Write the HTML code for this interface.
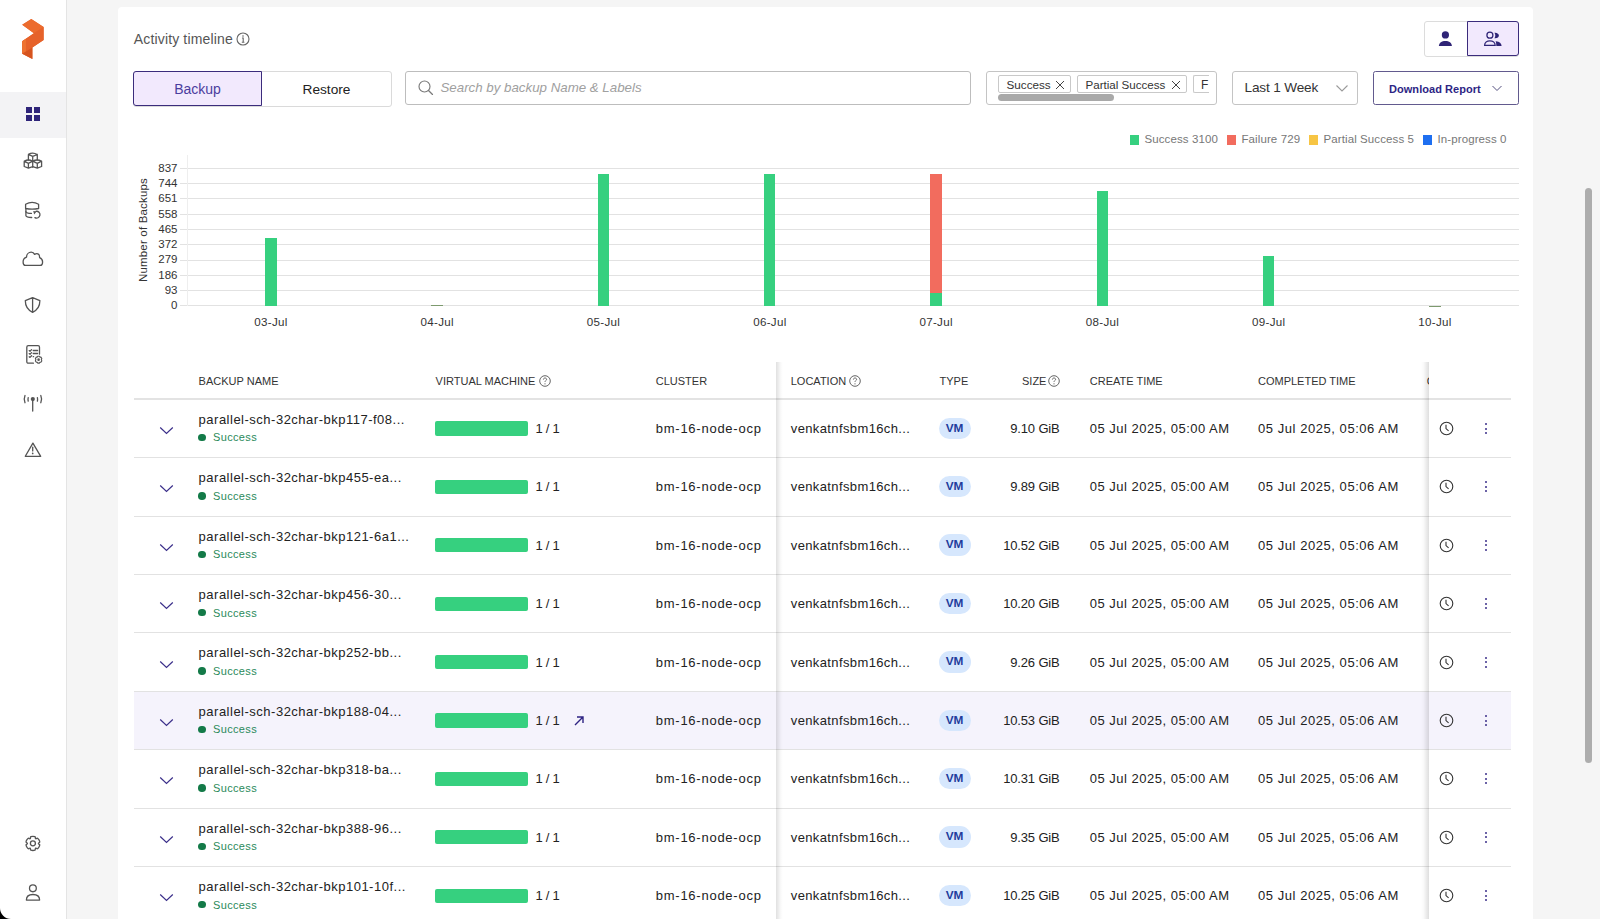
<!DOCTYPE html>
<html><head><meta charset="utf-8"><style>
html,body{margin:0;padding:0;width:1600px;height:919px;overflow:hidden;background:#f5f5f5;font-family:"Liberation Sans", sans-serif;}
.t{position:absolute;line-height:1;white-space:nowrap;}
</style></head><body>
<div style="position:absolute;left:0;top:0;width:66px;height:919px;background:#fff;border-right:1px solid #e4e4e4"></div>
<div style="position:absolute;left:0;top:92px;width:66px;height:46px;background:#f3f3f5"></div>
<svg style="position:absolute;left:0;top:0" width="66" height="80" viewBox="0 0 66 80">
<polygon points="31.3,19 43.6,27.1 43.6,40.1 32.4,47.5 32.4,59 22.2,53.7 22.2,41.2 33.9,33.3 22.2,24.7" fill="#e9672c"/>
<polygon points="31.3,19 43.6,27.1 33.9,33.3 22.2,24.7" fill="#ec6c2e"/>
<polygon points="22.2,41.2 33.9,33.3 43.6,27.1 43.6,40.1 32.4,47.5 22.2,53.7" fill="#e6622a"/>
<polygon points="22.2,41.2 26,38.7 26,51.4 22.2,53.7" fill="#ee7230"/>
<polygon points="22.2,53.7 32.4,47.5 32.4,59" fill="#d6541f"/>
</svg>
<svg style="position:absolute;left:26px;top:107px" width="15" height="15" viewBox="0 0 15 15">
<rect x="0" y="0" width="6" height="6" fill="#2e2479"/><rect x="8" y="0" width="6" height="6" fill="#2e2479"/>
<rect x="0" y="8" width="6" height="6" fill="#2e2479"/><rect x="8" y="8" width="6" height="6" fill="#2e2479"/></svg>
<svg style="position:absolute;left:21px;top:149px" width="24" height="22" viewBox="0 0 24 22"><g fill="none" stroke="#545454" stroke-width="1.3" stroke-linejoin="round" stroke-linecap="round" stroke-width="1.2">
<path d="M7.4 5.4 Q11.72 2.7 16.3 5.5 L11.72 7.4 Z M7.4 5.4 V11 M16.3 5.5 V11 M11.72 7.4 V18.2"/>
<path d="M3.2 12.2 Q7.4 9.8 11.72 12.2 L7.4 14.35 Z M3.2 12.2 V17.5 L7.4 19.1 L11.72 17.7 M7.4 14.35 V19.1"/>
<path d="M11.72 12.2 Q16.3 9.8 20.6 12.2 L16.3 14.35 Z M20.6 12.2 V17.5 L16.3 19.1 L11.72 17.7 M16.3 14.35 V19.1"/>
</g></svg>
<svg style="position:absolute;left:22px;top:198px" width="22" height="24" viewBox="0 0 22 24"><g fill="none" stroke="#545454" stroke-width="1.3" stroke-linejoin="round" stroke-linecap="round" stroke-width="1.35">
<path d="M3.6 6.2 Q10.1 2.4 16.6 6.2 V10.5 Q10.1 11.9 3.6 10.5 Z"/>
<path d="M3.9 10.5 V17.6 Q4.3 19.4 9.7 19.5"/>
<path d="M3.9 13.6 Q4.4 15.4 9.4 15.4"/>
<path d="M14 13.3 A3.4 3.4 0 1 1 12.9 19.6"/>
</g><polygon points="11.2,13.1 14.6,13.4 12.2,16.4" fill="#545454"/></svg>
<svg style="position:absolute;left:20px;top:247px" width="26" height="24" viewBox="0 0 26 24"><g fill="none" stroke="#545454" stroke-width="1.3" stroke-linejoin="round" stroke-linecap="round" stroke-width="1.35">
<path d="M5.4 18.4 H20.2 C21.7 18.4 22.6 16.9 22.6 14.9 C22.6 12.9 21.4 11.3 19.6 10.6 C19.6 8.3 18.4 6.7 16.8 6.7 C15.9 6.7 15.2 7 14.6 7.4 C13.9 6 12.6 5.2 11.2 5.2 C8.6 5.2 6.6 7.3 6.5 10.2 C4.5 10.9 3.1 12.6 3.1 14.9 C3.1 16.9 4.1 18.4 5.4 18.4 Z"/>
</g></svg>
<svg style="position:absolute;left:21px;top:293px" width="24" height="24" viewBox="0 0 24 24"><g fill="none" stroke="#545454" stroke-width="1.3" stroke-linejoin="round" stroke-linecap="round" stroke-width="1.4">
<path d="M11.6 4.6 L4.3 7.6 C4.3 13 7 17.3 11.6 19.3 C16.2 17.3 18.9 13 18.9 7.6 Z M11.6 4.6 V19.3"/>
</g></svg>
<svg style="position:absolute;left:22px;top:342px" width="24" height="26" viewBox="0 0 24 26"><g fill="none" stroke="#545454" stroke-width="1.3" stroke-linejoin="round" stroke-linecap="round" stroke-width="1.5">
<path d="M11.4 21.2 H6.3 C5.4 21.2 4.8 20.6 4.8 19.7 V5.2 C4.8 4.3 5.4 3.7 6.3 3.7 H16 C16.9 3.7 17.5 4.3 17.5 5.2 V12.2"/>
</g><g fill="none" stroke="#545454" stroke-width="1.3" stroke-linejoin="round" stroke-linecap="round" stroke-width="1.1">
<path d="M7.2 8.6 L8 9.2 L9.6 7.6 M11.2 8.5 H15.6"/>
<path d="M7.2 11.6 L8 12.2 L9.6 10.6 M11.2 11.5 H15.6"/>
<path d="M7.2 14.8 L8 15.4 L9.6 13.8 M11.2 14.7 H11.6"/>
</g><g fill="none" stroke="#545454" stroke-width="1.1" stroke-linejoin="round">
<path d="M15.7 14.2 H17.5 L17.9 15.1 L18.9 15.1 L19.8 16.6 L19.3 17.4 L19.8 18.9 L18.9 20.2 L17.9 20.2 L17.5 21.1 H15.7 L15.3 20.2 L14.3 20.2 L13.4 18.9 L13.9 17.4 L13.4 16.6 L14.3 15.1 L15.3 15.1 Z"/>
</g><circle cx="16.6" cy="17.65" r="1.3" fill="#545454"/></svg>
<svg style="position:absolute;left:20px;top:391px" width="26" height="24" viewBox="0 0 26 24"><g fill="none" stroke="#545454" stroke-width="1.3" stroke-linejoin="round" stroke-linecap="round" stroke-width="1.5">
<path d="M12.7 8.5 V20"/>
<path d="M8.2 6.6 Q7.8 8.35 8.2 10.1 M17.4 6.6 Q17.8 8.35 17.4 10.1"/>
<path d="M5 4.5 Q3.4 8.1 5 11.7 M20.8 4.5 Q22.4 8.1 20.8 11.7"/>
</g><circle cx="12.8" cy="8.1" r="2.1" fill="#545454"/></svg>
<svg style="position:absolute;left:21px;top:438px" width="24" height="24" viewBox="0 0 24 24"><g fill="none" stroke="#545454" stroke-width="1.3" stroke-linejoin="round" stroke-linecap="round" stroke-width="1.4">
<path d="M11.9 5.1 L19.7 18.3 H4.3 Z"/>
<path d="M11.7 9.2 V12.9"/>
</g><circle cx="11.7" cy="15.4" r="0.85" fill="#545454"/></svg>
<svg style="position:absolute;left:21px;top:831px" width="24" height="24" viewBox="0 0 24 24"><g fill="none" stroke="#545454" stroke-width="1.3" stroke-linejoin="round" stroke-linecap="round" stroke-width="1.4">
<path d="M9.50 6.52 C8.61 5.05 15.19 5.05 14.30 6.52 Q14.20 8.47 15.84 7.41 C16.66 5.90 19.96 11.60 18.24 11.56 Q16.50 12.45 18.24 13.34 C19.96 13.30 16.66 19.00 15.84 17.49 Q14.20 16.43 14.30 18.38 C15.19 19.85 8.61 19.85 9.50 18.38 Q9.60 16.43 7.96 17.49 C7.14 19.00 3.84 13.30 5.56 13.34 Q7.30 12.45 5.56 11.56 C3.84 11.60 7.14 5.90 7.96 7.41 Q9.60 8.47 9.50 6.52 Z"/>
<circle cx="11.9" cy="12.3" r="2.5"/>
</g></svg>
<svg style="position:absolute;left:21px;top:880px" width="24" height="24" viewBox="0 0 24 24"><g fill="none" stroke="#545454" stroke-width="1.3" stroke-linejoin="round" stroke-linecap="round" stroke-width="1.4">
<circle cx="11.9" cy="8.35" r="3.4"/>
<path d="M5.4 20.1 C5.4 16.4 8.2 14.5 11.9 14.5 C15.6 14.5 18.6 16.4 18.6 20.1 Z"/>
</g></svg>
<svg style="position:absolute;left:0;top:908px" width="11" height="11" viewBox="0 0 11 11"><path d="M0 0 A11 11 0 0 0 11 11 H0 Z" fill="#000"/></svg>
<div style="position:absolute;left:118px;top:7px;width:1415px;height:920px;background:#fff;border-radius:4px"></div>
<div class="t" style="left:133.8px;top:31.85px;font-size:14px;color:#555;letter-spacing:0.15px">Activity timeline</div>
<svg style="position:absolute;left:236px;top:32px" width="14" height="14" viewBox="0 0 14 14"><g fill="none" stroke="#666" stroke-width="1.1">
<circle cx="7" cy="7" r="6"/><path d="M6 6 H7.2 V10.3 M5.8 10.3 H8.4"/></g><circle cx="7" cy="4" r="0.8" fill="#666"/></svg>
<div style="position:absolute;left:133px;top:70.5px;width:259px;height:36px;border:1px solid #dadada;border-radius:3px;box-sizing:border-box"></div>
<div style="position:absolute;left:133px;top:71px;width:129px;height:35px;border:1.7px solid #3b2c7c;background:#f2e9fd;border-radius:3px 0 0 3px;box-sizing:border-box"></div>
<div class="t" style="left:197.5px;transform:translateX(-50%);top:82.25px;font-size:14px;color:#4b3d9e;">Backup</div>
<div class="t" style="left:326.5px;transform:translateX(-50%);top:82.50px;font-size:13.7px;color:#222;">Restore</div>
<div style="position:absolute;left:405px;top:71px;width:566px;height:34px;border:1px solid #bdbdbd;border-radius:3px;box-sizing:border-box"></div>
<svg style="position:absolute;left:417px;top:79px" width="18" height="18" viewBox="0 0 18 18"><g fill="none" stroke="#7a7a7a" stroke-width="1.15" stroke-linecap="round">
<circle cx="7.5" cy="7.5" r="5.5"/><path d="M11.5 11.5 L15.5 15.5"/></g></svg>
<div class="t" style="left:440.5px;top:81.14px;font-size:13.3px;color:#a0a0a0;font-style:italic;letter-spacing:0.0px">Search by backup Name &amp; Labels</div>
<div style="position:absolute;left:986px;top:71px;width:231px;height:34px;border:1px solid #c4c4c4;border-radius:3px;box-sizing:border-box"></div>
<div style="position:absolute;left:998px;top:75px;width:73px;height:18px;border:1px solid #c9c9c9;border-radius:2px;box-sizing:border-box"></div>
<div class="t" style="left:1006.5px;top:79.10px;font-size:11.7px;color:#333;">Success</div>
<div style="position:absolute;left:1077px;top:75px;width:110px;height:18px;border:1px solid #c9c9c9;border-radius:2px;box-sizing:border-box"></div>
<div class="t" style="left:1085.5px;top:79.18px;font-size:11.6px;color:#333;">Partial Success</div>
<svg style="position:absolute;left:1054.5px;top:79.5px" width="10" height="10" viewBox="0 0 10 10"><path d="M1 1 L9 9 M9 1 L1 9" stroke="#444" stroke-width="1"/></svg>
<svg style="position:absolute;left:1170.5px;top:79.5px" width="10" height="10" viewBox="0 0 10 10"><path d="M1 1 L9 9 M9 1 L1 9" stroke="#444" stroke-width="1"/></svg>
<div style="position:absolute;left:1193px;top:75px;width:16px;height:18px;border:1px solid #c9c9c9;border-right:none;border-radius:2px 0 0 2px;box-sizing:border-box;overflow:hidden"></div>
<div class="t" style="left:1201px;top:78.84px;font-size:12px;color:#333;">F</div>
<div style="position:absolute;left:998px;top:93.5px;width:116px;height:7px;background:#a9a9a9;border-radius:4px"></div>
<div style="position:absolute;left:1232px;top:71px;width:126px;height:34px;border:1px solid #c4c4c4;border-radius:3px;box-sizing:border-box"></div>
<div class="t" style="left:1244.5px;top:81.09px;font-size:13.6px;color:#333;letter-spacing:-0.15px">Last 1 Week</div>
<svg style="position:absolute;left:1335px;top:83px" width="14" height="10" viewBox="0 0 14 10"><path d="M1.5 2.5 L7 8 L12.5 2.5" fill="none" stroke="#9a9a9a" stroke-width="1.1"/></svg>
<div style="position:absolute;left:1373px;top:71px;width:146px;height:34px;border:1.3px solid #625a8e;border-radius:2.5px;box-sizing:border-box"></div>
<div class="t" style="left:1389px;top:83.59px;font-size:11px;color:#2d2584;font-weight:bold;letter-spacing:0.05px">Download Report</div>
<svg style="position:absolute;left:1491px;top:83px" width="12" height="10" viewBox="0 0 12 10"><path d="M1.5 3 L6 7.5 L10.5 3" fill="none" stroke="#555080" stroke-width="1"/></svg>
<div style="position:absolute;left:1423.5px;top:20.5px;width:95px;height:36px;border:1px solid #dcdcdc;border-radius:3px;box-sizing:border-box"></div>
<div style="position:absolute;left:1466.5px;top:21px;width:52px;height:35px;border:1.8px solid #3b2c7c;background:#f2e9fd;border-radius:0 3px 3px 0;box-sizing:border-box"></div>
<svg style="position:absolute;left:1420px;top:16px" width="104" height="46" viewBox="0 0 104 46">
<g fill="#2f2476"><circle cx="25.4" cy="18.9" r="3.6"/><path d="M18.9 30 C18.9 26.9 21.8 25 25.4 25 C29 25 31.9 26.9 31.9 30 Z"/></g>
<g fill="none" stroke="#2f2476" stroke-width="1.25"><circle cx="69.9" cy="19.2" r="3.0"/><path d="M64.6 29.4 C64.6 26.6 67 24.8 69.9 24.8 C72.8 24.8 75.2 26.6 75.2 29.4 Z"/></g>
<g fill="#2f2476"><path d="M74.4 16.7 C77.2 16.4 78.9 18 78.9 19.5 C78.9 21.2 77.3 22.6 74.4 22.3 C75.6 20.7 75.6 18.3 74.4 16.7 Z"/>
<path d="M76 25.2 C79.5 25.6 81.6 27.3 81.6 30 H76.3 C76.3 28.3 76.2 26.6 75.6 25.2 Z"/></g></svg>
<div style="position:absolute;left:1130px;top:135px;width:9px;height:10px;background:#36d07f"></div>
<div class="t" style="left:1144.5px;top:134.07px;font-size:11.5px;color:#777;letter-spacing:0.1px">Success 3100</div>
<div style="position:absolute;left:1227px;top:135px;width:9px;height:10px;background:#f26c5e"></div>
<div class="t" style="left:1241.5px;top:134.07px;font-size:11.5px;color:#777;letter-spacing:0.1px">Failure 729</div>
<div style="position:absolute;left:1309px;top:135px;width:9px;height:10px;background:#f7c544"></div>
<div class="t" style="left:1323.5px;top:134.07px;font-size:11.5px;color:#777;letter-spacing:0.1px">Partial Success 5</div>
<div style="position:absolute;left:1423px;top:135px;width:9px;height:10px;background:#1e6ff0"></div>
<div class="t" style="left:1437.5px;top:134.07px;font-size:11.5px;color:#777;letter-spacing:0.1px">In-progress 0</div>
<div style="position:absolute;left:180px;top:168px;width:1339px;height:1px;background:#e2e2e2"></div>
<div class="t" style="right:1422.5px;top:162.67px;font-size:11.5px;color:#333;">837</div>
<div style="position:absolute;left:180px;top:183px;width:1339px;height:1px;background:#e2e2e2"></div>
<div class="t" style="right:1422.5px;top:177.95px;font-size:11.5px;color:#333;">744</div>
<div style="position:absolute;left:180px;top:198px;width:1339px;height:1px;background:#e2e2e2"></div>
<div class="t" style="right:1422.5px;top:193.24px;font-size:11.5px;color:#333;">651</div>
<div style="position:absolute;left:180px;top:214px;width:1339px;height:1px;background:#e2e2e2"></div>
<div class="t" style="right:1422.5px;top:208.53px;font-size:11.5px;color:#333;">558</div>
<div style="position:absolute;left:180px;top:229px;width:1339px;height:1px;background:#e2e2e2"></div>
<div class="t" style="right:1422.5px;top:223.82px;font-size:11.5px;color:#333;">465</div>
<div style="position:absolute;left:180px;top:244px;width:1339px;height:1px;background:#e2e2e2"></div>
<div class="t" style="right:1422.5px;top:239.11px;font-size:11.5px;color:#333;">372</div>
<div style="position:absolute;left:180px;top:260px;width:1339px;height:1px;background:#e2e2e2"></div>
<div class="t" style="right:1422.5px;top:254.40px;font-size:11.5px;color:#333;">279</div>
<div style="position:absolute;left:180px;top:275px;width:1339px;height:1px;background:#e2e2e2"></div>
<div class="t" style="right:1422.5px;top:269.69px;font-size:11.5px;color:#333;">186</div>
<div style="position:absolute;left:180px;top:290px;width:1339px;height:1px;background:#e2e2e2"></div>
<div class="t" style="right:1422.5px;top:284.98px;font-size:11.5px;color:#333;">93</div>
<div style="position:absolute;left:180px;top:305px;width:1339px;height:1px;background:#e2e2e2"></div>
<div class="t" style="right:1422.5px;top:300.27px;font-size:11.5px;color:#333;">0</div>
<div style="position:absolute;left:187px;top:155px;width:1px;height:150.9px;background:#eeeeee"></div>
<div class="t" style="left:144px;top:230px;font-size:11.5px;letter-spacing:0.18px;color:#333;transform:translate(-50%,-50%) rotate(-90deg);white-space:nowrap">Number of Backups</div>
<div class="t" style="left:270.95px;transform:translateX(-50%);top:316.38px;font-size:11.6px;color:#333;letter-spacing:0.3px">03-Jul</div>
<div style="position:absolute;left:265.00px;top:237.8px;width:11.6px;height:68.10px;background:#36d07f"></div>
<div class="t" style="left:437.25px;transform:translateX(-50%);top:316.38px;font-size:11.6px;color:#333;letter-spacing:0.3px">04-Jul</div>
<div style="position:absolute;left:431.30px;top:304.9px;width:11.6px;height:1.00px;background:#7d9a6e"></div>
<div class="t" style="left:603.5500000000001px;transform:translateX(-50%);top:316.38px;font-size:11.6px;color:#333;letter-spacing:0.3px">05-Jul</div>
<div style="position:absolute;left:597.60px;top:174.3px;width:11.6px;height:131.60px;background:#36d07f"></div>
<div class="t" style="left:769.85px;transform:translateX(-50%);top:316.38px;font-size:11.6px;color:#333;letter-spacing:0.3px">06-Jul</div>
<div style="position:absolute;left:763.90px;top:174.3px;width:11.6px;height:131.60px;background:#36d07f"></div>
<div class="t" style="left:936.15px;transform:translateX(-50%);top:316.38px;font-size:11.6px;color:#333;letter-spacing:0.3px">07-Jul</div>
<div style="position:absolute;left:930.20px;top:174.1px;width:11.6px;height:118.70px;background:#f26c5e"></div>
<div style="position:absolute;left:930.20px;top:292.8px;width:11.6px;height:13.10px;background:#36d07f"></div>
<div class="t" style="left:1102.45px;transform:translateX(-50%);top:316.38px;font-size:11.6px;color:#333;letter-spacing:0.3px">08-Jul</div>
<div style="position:absolute;left:1096.50px;top:190.5px;width:11.6px;height:115.40px;background:#36d07f"></div>
<div class="t" style="left:1268.7500000000002px;transform:translateX(-50%);top:316.38px;font-size:11.6px;color:#333;letter-spacing:0.3px">09-Jul</div>
<div style="position:absolute;left:1262.80px;top:256.1px;width:11.6px;height:49.80px;background:#36d07f"></div>
<div class="t" style="left:1435.0500000000002px;transform:translateX(-50%);top:316.38px;font-size:11.6px;color:#333;letter-spacing:0.3px">10-Jul</div>
<div style="position:absolute;left:1429.10px;top:305.5px;width:11.6px;height:0.40px;background:#7d9a6e"></div>
<div class="t" style="left:198.6px;top:375.59px;font-size:11px;color:#333;">BACKUP NAME</div>
<div class="t" style="left:435.6px;top:375.59px;font-size:11px;color:#333;">VIRTUAL MACHINE</div>
<svg style="position:absolute;left:539.3px;top:374.9px" width="12" height="12" viewBox="0 0 12 12"><g fill="none" stroke="#555" stroke-width="0.9"><circle cx="6" cy="6" r="5.3"/><path d="M4.4 4.6 C4.4 3.6 5.1 3 6 3 C6.9 3 7.6 3.6 7.6 4.4 C7.6 5.4 6 5.6 6 6.9"/></g><circle cx="6" cy="8.8" r="0.6" fill="#555"/></svg>
<div class="t" style="left:655.75px;top:375.59px;font-size:11px;color:#333;">CLUSTER</div>
<div class="t" style="left:790.75px;top:375.59px;font-size:11px;color:#333;">LOCATION</div>
<svg style="position:absolute;left:849.2px;top:374.9px" width="12" height="12" viewBox="0 0 12 12"><g fill="none" stroke="#555" stroke-width="0.9"><circle cx="6" cy="6" r="5.3"/><path d="M4.4 4.6 C4.4 3.6 5.1 3 6 3 C6.9 3 7.6 3.6 7.6 4.4 C7.6 5.4 6 5.6 6 6.9"/></g><circle cx="6" cy="8.8" r="0.6" fill="#555"/></svg>
<div class="t" style="left:939.5px;top:375.59px;font-size:11px;color:#333;">TYPE</div>
<div class="t" style="left:1022px;top:375.59px;font-size:11px;color:#333;">SIZE</div>
<svg style="position:absolute;left:1048.2px;top:374.9px" width="12" height="12" viewBox="0 0 12 12"><g fill="none" stroke="#555" stroke-width="0.9"><circle cx="6" cy="6" r="5.3"/><path d="M4.4 4.6 C4.4 3.6 5.1 3 6 3 C6.9 3 7.6 3.6 7.6 4.4 C7.6 5.4 6 5.6 6 6.9"/></g><circle cx="6" cy="8.8" r="0.6" fill="#555"/></svg>
<div class="t" style="left:1089.75px;top:375.59px;font-size:11px;color:#333;">CREATE TIME</div>
<div class="t" style="left:1258px;top:375.59px;font-size:11px;color:#333;">COMPLETED TIME</div>
<div style="position:absolute;left:133.5px;top:398.2px;width:1377px;height:1.5px;background:#e3e3e3"></div>
<div style="position:absolute;left:133.5px;top:457.10px;width:1377px;height:1px;background:#e2e2e2"></div>
<svg style="position:absolute;left:159px;top:426.00px" width="15" height="9" viewBox="0 0 15 9"><path d="M1.2 1.5 L7.5 7.5 L13.8 1.5" fill="none" stroke="#3b2f8a" stroke-width="1.2"/></svg>
<div class="t" style="left:198.6px;top:412.80px;font-size:13px;color:#222;letter-spacing:0.5px">parallel-sch-32char-bkp117-f08...</div>
<div style="position:absolute;left:198px;top:433.70px;width:7.6px;height:7.6px;border-radius:50%;background:#137a48"></div>
<div class="t" style="left:213px;top:432.49px;font-size:11px;color:#2a8a5a;letter-spacing:0.35px">Success</div>
<div style="position:absolute;left:435px;top:421.30px;width:93px;height:14.4px;border-radius:2px;background:#36d07f"></div>
<div class="t" style="left:535.6px;top:422.00px;font-size:13px;color:#222;letter-spacing:-0.3px">1 / 1</div>
<div class="t" style="left:655.75px;top:422.00px;font-size:13px;color:#222;letter-spacing:0.75px">bm-16-node-ocp</div>
<div class="t" style="left:790.75px;top:422.00px;font-size:13px;color:#222;letter-spacing:0.38px">venkatnfsbm16ch...</div>
<div style="position:absolute;left:938.5px;top:417.50px;width:32px;height:21.5px;border-radius:11px;background:#d6e7fd"></div>
<div class="t" style="left:954.5px;transform:translateX(-50%);top:422.61px;font-size:11.8px;color:#1f3d9c;font-weight:bold">VM</div>
<div class="t" style="right:540.4000000000001px;top:422.00px;font-size:13px;color:#222;letter-spacing:-0.15px">9.10 GiB</div>
<div class="t" style="left:1089.75px;top:422.00px;font-size:13px;color:#222;letter-spacing:0.5px">05 Jul 2025, 05:00 AM</div>
<div class="t" style="left:1258px;top:422.00px;font-size:13px;color:#222;letter-spacing:0.55px">05 Jul 2025, 05:06 AM</div>
<svg style="position:absolute;left:1439px;top:421.00px" width="15" height="15" viewBox="0 0 15 15"><g fill="none" stroke="#333" stroke-width="1.1"><circle cx="7.5" cy="7.5" r="6.3"/><path d="M7 3.8 V7.6 L9.6 9.8"/></g></svg>
<div style="position:absolute;left:1485px;top:422.90px;width:2.2px;height:2.2px;border-radius:50%;background:#3b2f8a"></div>
<div style="position:absolute;left:1485px;top:427.50px;width:2.2px;height:2.2px;border-radius:50%;background:#3b2f8a"></div>
<div style="position:absolute;left:1485px;top:431.90px;width:2.2px;height:2.2px;border-radius:50%;background:#3b2f8a"></div>
<div style="position:absolute;left:133.5px;top:515.50px;width:1377px;height:1px;background:#e2e2e2"></div>
<svg style="position:absolute;left:159px;top:484.40px" width="15" height="9" viewBox="0 0 15 9"><path d="M1.2 1.5 L7.5 7.5 L13.8 1.5" fill="none" stroke="#3b2f8a" stroke-width="1.2"/></svg>
<div class="t" style="left:198.6px;top:471.20px;font-size:13px;color:#222;letter-spacing:0.5px">parallel-sch-32char-bkp455-ea...</div>
<div style="position:absolute;left:198px;top:492.10px;width:7.6px;height:7.6px;border-radius:50%;background:#137a48"></div>
<div class="t" style="left:213px;top:490.89px;font-size:11px;color:#2a8a5a;letter-spacing:0.35px">Success</div>
<div style="position:absolute;left:435px;top:479.70px;width:93px;height:14.4px;border-radius:2px;background:#36d07f"></div>
<div class="t" style="left:535.6px;top:480.40px;font-size:13px;color:#222;letter-spacing:-0.3px">1 / 1</div>
<div class="t" style="left:655.75px;top:480.40px;font-size:13px;color:#222;letter-spacing:0.75px">bm-16-node-ocp</div>
<div class="t" style="left:790.75px;top:480.40px;font-size:13px;color:#222;letter-spacing:0.38px">venkatnfsbm16ch...</div>
<div style="position:absolute;left:938.5px;top:475.90px;width:32px;height:21.5px;border-radius:11px;background:#d6e7fd"></div>
<div class="t" style="left:954.5px;transform:translateX(-50%);top:481.01px;font-size:11.8px;color:#1f3d9c;font-weight:bold">VM</div>
<div class="t" style="right:540.4000000000001px;top:480.40px;font-size:13px;color:#222;letter-spacing:-0.15px">9.89 GiB</div>
<div class="t" style="left:1089.75px;top:480.40px;font-size:13px;color:#222;letter-spacing:0.5px">05 Jul 2025, 05:00 AM</div>
<div class="t" style="left:1258px;top:480.40px;font-size:13px;color:#222;letter-spacing:0.55px">05 Jul 2025, 05:06 AM</div>
<svg style="position:absolute;left:1439px;top:479.40px" width="15" height="15" viewBox="0 0 15 15"><g fill="none" stroke="#333" stroke-width="1.1"><circle cx="7.5" cy="7.5" r="6.3"/><path d="M7 3.8 V7.6 L9.6 9.8"/></g></svg>
<div style="position:absolute;left:1485px;top:481.30px;width:2.2px;height:2.2px;border-radius:50%;background:#3b2f8a"></div>
<div style="position:absolute;left:1485px;top:485.90px;width:2.2px;height:2.2px;border-radius:50%;background:#3b2f8a"></div>
<div style="position:absolute;left:1485px;top:490.30px;width:2.2px;height:2.2px;border-radius:50%;background:#3b2f8a"></div>
<div style="position:absolute;left:133.5px;top:573.90px;width:1377px;height:1px;background:#e2e2e2"></div>
<svg style="position:absolute;left:159px;top:542.80px" width="15" height="9" viewBox="0 0 15 9"><path d="M1.2 1.5 L7.5 7.5 L13.8 1.5" fill="none" stroke="#3b2f8a" stroke-width="1.2"/></svg>
<div class="t" style="left:198.6px;top:529.60px;font-size:13px;color:#222;letter-spacing:0.5px">parallel-sch-32char-bkp121-6a1...</div>
<div style="position:absolute;left:198px;top:550.50px;width:7.6px;height:7.6px;border-radius:50%;background:#137a48"></div>
<div class="t" style="left:213px;top:549.29px;font-size:11px;color:#2a8a5a;letter-spacing:0.35px">Success</div>
<div style="position:absolute;left:435px;top:538.10px;width:93px;height:14.4px;border-radius:2px;background:#36d07f"></div>
<div class="t" style="left:535.6px;top:538.80px;font-size:13px;color:#222;letter-spacing:-0.3px">1 / 1</div>
<div class="t" style="left:655.75px;top:538.80px;font-size:13px;color:#222;letter-spacing:0.75px">bm-16-node-ocp</div>
<div class="t" style="left:790.75px;top:538.80px;font-size:13px;color:#222;letter-spacing:0.38px">venkatnfsbm16ch...</div>
<div style="position:absolute;left:938.5px;top:534.30px;width:32px;height:21.5px;border-radius:11px;background:#d6e7fd"></div>
<div class="t" style="left:954.5px;transform:translateX(-50%);top:539.41px;font-size:11.8px;color:#1f3d9c;font-weight:bold">VM</div>
<div class="t" style="right:540.4000000000001px;top:538.80px;font-size:13px;color:#222;letter-spacing:-0.15px">10.52 GiB</div>
<div class="t" style="left:1089.75px;top:538.80px;font-size:13px;color:#222;letter-spacing:0.5px">05 Jul 2025, 05:00 AM</div>
<div class="t" style="left:1258px;top:538.80px;font-size:13px;color:#222;letter-spacing:0.55px">05 Jul 2025, 05:06 AM</div>
<svg style="position:absolute;left:1439px;top:537.80px" width="15" height="15" viewBox="0 0 15 15"><g fill="none" stroke="#333" stroke-width="1.1"><circle cx="7.5" cy="7.5" r="6.3"/><path d="M7 3.8 V7.6 L9.6 9.8"/></g></svg>
<div style="position:absolute;left:1485px;top:539.70px;width:2.2px;height:2.2px;border-radius:50%;background:#3b2f8a"></div>
<div style="position:absolute;left:1485px;top:544.30px;width:2.2px;height:2.2px;border-radius:50%;background:#3b2f8a"></div>
<div style="position:absolute;left:1485px;top:548.70px;width:2.2px;height:2.2px;border-radius:50%;background:#3b2f8a"></div>
<div style="position:absolute;left:133.5px;top:632.30px;width:1377px;height:1px;background:#e2e2e2"></div>
<svg style="position:absolute;left:159px;top:601.20px" width="15" height="9" viewBox="0 0 15 9"><path d="M1.2 1.5 L7.5 7.5 L13.8 1.5" fill="none" stroke="#3b2f8a" stroke-width="1.2"/></svg>
<div class="t" style="left:198.6px;top:588.00px;font-size:13px;color:#222;letter-spacing:0.5px">parallel-sch-32char-bkp456-30...</div>
<div style="position:absolute;left:198px;top:608.90px;width:7.6px;height:7.6px;border-radius:50%;background:#137a48"></div>
<div class="t" style="left:213px;top:607.69px;font-size:11px;color:#2a8a5a;letter-spacing:0.35px">Success</div>
<div style="position:absolute;left:435px;top:596.50px;width:93px;height:14.4px;border-radius:2px;background:#36d07f"></div>
<div class="t" style="left:535.6px;top:597.20px;font-size:13px;color:#222;letter-spacing:-0.3px">1 / 1</div>
<div class="t" style="left:655.75px;top:597.20px;font-size:13px;color:#222;letter-spacing:0.75px">bm-16-node-ocp</div>
<div class="t" style="left:790.75px;top:597.20px;font-size:13px;color:#222;letter-spacing:0.38px">venkatnfsbm16ch...</div>
<div style="position:absolute;left:938.5px;top:592.70px;width:32px;height:21.5px;border-radius:11px;background:#d6e7fd"></div>
<div class="t" style="left:954.5px;transform:translateX(-50%);top:597.81px;font-size:11.8px;color:#1f3d9c;font-weight:bold">VM</div>
<div class="t" style="right:540.4000000000001px;top:597.20px;font-size:13px;color:#222;letter-spacing:-0.15px">10.20 GiB</div>
<div class="t" style="left:1089.75px;top:597.20px;font-size:13px;color:#222;letter-spacing:0.5px">05 Jul 2025, 05:00 AM</div>
<div class="t" style="left:1258px;top:597.20px;font-size:13px;color:#222;letter-spacing:0.55px">05 Jul 2025, 05:06 AM</div>
<svg style="position:absolute;left:1439px;top:596.20px" width="15" height="15" viewBox="0 0 15 15"><g fill="none" stroke="#333" stroke-width="1.1"><circle cx="7.5" cy="7.5" r="6.3"/><path d="M7 3.8 V7.6 L9.6 9.8"/></g></svg>
<div style="position:absolute;left:1485px;top:598.10px;width:2.2px;height:2.2px;border-radius:50%;background:#3b2f8a"></div>
<div style="position:absolute;left:1485px;top:602.70px;width:2.2px;height:2.2px;border-radius:50%;background:#3b2f8a"></div>
<div style="position:absolute;left:1485px;top:607.10px;width:2.2px;height:2.2px;border-radius:50%;background:#3b2f8a"></div>
<div style="position:absolute;left:133.5px;top:690.70px;width:1377px;height:1px;background:#e2e2e2"></div>
<svg style="position:absolute;left:159px;top:659.60px" width="15" height="9" viewBox="0 0 15 9"><path d="M1.2 1.5 L7.5 7.5 L13.8 1.5" fill="none" stroke="#3b2f8a" stroke-width="1.2"/></svg>
<div class="t" style="left:198.6px;top:646.40px;font-size:13px;color:#222;letter-spacing:0.5px">parallel-sch-32char-bkp252-bb...</div>
<div style="position:absolute;left:198px;top:667.30px;width:7.6px;height:7.6px;border-radius:50%;background:#137a48"></div>
<div class="t" style="left:213px;top:666.09px;font-size:11px;color:#2a8a5a;letter-spacing:0.35px">Success</div>
<div style="position:absolute;left:435px;top:654.90px;width:93px;height:14.4px;border-radius:2px;background:#36d07f"></div>
<div class="t" style="left:535.6px;top:655.60px;font-size:13px;color:#222;letter-spacing:-0.3px">1 / 1</div>
<div class="t" style="left:655.75px;top:655.60px;font-size:13px;color:#222;letter-spacing:0.75px">bm-16-node-ocp</div>
<div class="t" style="left:790.75px;top:655.60px;font-size:13px;color:#222;letter-spacing:0.38px">venkatnfsbm16ch...</div>
<div style="position:absolute;left:938.5px;top:651.10px;width:32px;height:21.5px;border-radius:11px;background:#d6e7fd"></div>
<div class="t" style="left:954.5px;transform:translateX(-50%);top:656.21px;font-size:11.8px;color:#1f3d9c;font-weight:bold">VM</div>
<div class="t" style="right:540.4000000000001px;top:655.60px;font-size:13px;color:#222;letter-spacing:-0.15px">9.26 GiB</div>
<div class="t" style="left:1089.75px;top:655.60px;font-size:13px;color:#222;letter-spacing:0.5px">05 Jul 2025, 05:00 AM</div>
<div class="t" style="left:1258px;top:655.60px;font-size:13px;color:#222;letter-spacing:0.55px">05 Jul 2025, 05:06 AM</div>
<svg style="position:absolute;left:1439px;top:654.60px" width="15" height="15" viewBox="0 0 15 15"><g fill="none" stroke="#333" stroke-width="1.1"><circle cx="7.5" cy="7.5" r="6.3"/><path d="M7 3.8 V7.6 L9.6 9.8"/></g></svg>
<div style="position:absolute;left:1485px;top:656.50px;width:2.2px;height:2.2px;border-radius:50%;background:#3b2f8a"></div>
<div style="position:absolute;left:1485px;top:661.10px;width:2.2px;height:2.2px;border-radius:50%;background:#3b2f8a"></div>
<div style="position:absolute;left:1485px;top:665.50px;width:2.2px;height:2.2px;border-radius:50%;background:#3b2f8a"></div>
<div style="position:absolute;left:133.5px;top:691.50px;width:1377px;height:58.40px;background:#f5f3fc"></div>
<div style="position:absolute;left:133.5px;top:749.10px;width:1377px;height:1px;background:#e2e2e2"></div>
<svg style="position:absolute;left:159px;top:718.00px" width="15" height="9" viewBox="0 0 15 9"><path d="M1.2 1.5 L7.5 7.5 L13.8 1.5" fill="none" stroke="#3b2f8a" stroke-width="1.2"/></svg>
<div class="t" style="left:198.6px;top:704.80px;font-size:13px;color:#222;letter-spacing:0.5px">parallel-sch-32char-bkp188-04...</div>
<div style="position:absolute;left:198px;top:725.70px;width:7.6px;height:7.6px;border-radius:50%;background:#137a48"></div>
<div class="t" style="left:213px;top:724.49px;font-size:11px;color:#2a8a5a;letter-spacing:0.35px">Success</div>
<div style="position:absolute;left:435px;top:713.30px;width:93px;height:14.4px;border-radius:2px;background:#36d07f"></div>
<div class="t" style="left:535.6px;top:714.00px;font-size:13px;color:#222;letter-spacing:-0.3px">1 / 1</div>
<svg style="position:absolute;left:572px;top:713.50px" width="14" height="14" viewBox="0 0 14 14"><path d="M3 11 L11 3 M5 3 H11 V9" fill="none" stroke="#2e2383" stroke-width="1.4"/></svg>
<div class="t" style="left:655.75px;top:714.00px;font-size:13px;color:#222;letter-spacing:0.75px">bm-16-node-ocp</div>
<div class="t" style="left:790.75px;top:714.00px;font-size:13px;color:#222;letter-spacing:0.38px">venkatnfsbm16ch...</div>
<div style="position:absolute;left:938.5px;top:709.50px;width:32px;height:21.5px;border-radius:11px;background:#d6e7fd"></div>
<div class="t" style="left:954.5px;transform:translateX(-50%);top:714.61px;font-size:11.8px;color:#1f3d9c;font-weight:bold">VM</div>
<div class="t" style="right:540.4000000000001px;top:714.00px;font-size:13px;color:#222;letter-spacing:-0.15px">10.53 GiB</div>
<div class="t" style="left:1089.75px;top:714.00px;font-size:13px;color:#222;letter-spacing:0.5px">05 Jul 2025, 05:00 AM</div>
<div class="t" style="left:1258px;top:714.00px;font-size:13px;color:#222;letter-spacing:0.55px">05 Jul 2025, 05:06 AM</div>
<svg style="position:absolute;left:1439px;top:713.00px" width="15" height="15" viewBox="0 0 15 15"><g fill="none" stroke="#333" stroke-width="1.1"><circle cx="7.5" cy="7.5" r="6.3"/><path d="M7 3.8 V7.6 L9.6 9.8"/></g></svg>
<div style="position:absolute;left:1485px;top:714.90px;width:2.2px;height:2.2px;border-radius:50%;background:#3b2f8a"></div>
<div style="position:absolute;left:1485px;top:719.50px;width:2.2px;height:2.2px;border-radius:50%;background:#3b2f8a"></div>
<div style="position:absolute;left:1485px;top:723.90px;width:2.2px;height:2.2px;border-radius:50%;background:#3b2f8a"></div>
<div style="position:absolute;left:133.5px;top:807.50px;width:1377px;height:1px;background:#e2e2e2"></div>
<svg style="position:absolute;left:159px;top:776.40px" width="15" height="9" viewBox="0 0 15 9"><path d="M1.2 1.5 L7.5 7.5 L13.8 1.5" fill="none" stroke="#3b2f8a" stroke-width="1.2"/></svg>
<div class="t" style="left:198.6px;top:763.20px;font-size:13px;color:#222;letter-spacing:0.5px">parallel-sch-32char-bkp318-ba...</div>
<div style="position:absolute;left:198px;top:784.10px;width:7.6px;height:7.6px;border-radius:50%;background:#137a48"></div>
<div class="t" style="left:213px;top:782.89px;font-size:11px;color:#2a8a5a;letter-spacing:0.35px">Success</div>
<div style="position:absolute;left:435px;top:771.70px;width:93px;height:14.4px;border-radius:2px;background:#36d07f"></div>
<div class="t" style="left:535.6px;top:772.40px;font-size:13px;color:#222;letter-spacing:-0.3px">1 / 1</div>
<div class="t" style="left:655.75px;top:772.40px;font-size:13px;color:#222;letter-spacing:0.75px">bm-16-node-ocp</div>
<div class="t" style="left:790.75px;top:772.40px;font-size:13px;color:#222;letter-spacing:0.38px">venkatnfsbm16ch...</div>
<div style="position:absolute;left:938.5px;top:767.90px;width:32px;height:21.5px;border-radius:11px;background:#d6e7fd"></div>
<div class="t" style="left:954.5px;transform:translateX(-50%);top:773.01px;font-size:11.8px;color:#1f3d9c;font-weight:bold">VM</div>
<div class="t" style="right:540.4000000000001px;top:772.40px;font-size:13px;color:#222;letter-spacing:-0.15px">10.31 GiB</div>
<div class="t" style="left:1089.75px;top:772.40px;font-size:13px;color:#222;letter-spacing:0.5px">05 Jul 2025, 05:00 AM</div>
<div class="t" style="left:1258px;top:772.40px;font-size:13px;color:#222;letter-spacing:0.55px">05 Jul 2025, 05:06 AM</div>
<svg style="position:absolute;left:1439px;top:771.40px" width="15" height="15" viewBox="0 0 15 15"><g fill="none" stroke="#333" stroke-width="1.1"><circle cx="7.5" cy="7.5" r="6.3"/><path d="M7 3.8 V7.6 L9.6 9.8"/></g></svg>
<div style="position:absolute;left:1485px;top:773.30px;width:2.2px;height:2.2px;border-radius:50%;background:#3b2f8a"></div>
<div style="position:absolute;left:1485px;top:777.90px;width:2.2px;height:2.2px;border-radius:50%;background:#3b2f8a"></div>
<div style="position:absolute;left:1485px;top:782.30px;width:2.2px;height:2.2px;border-radius:50%;background:#3b2f8a"></div>
<div style="position:absolute;left:133.5px;top:865.90px;width:1377px;height:1px;background:#e2e2e2"></div>
<svg style="position:absolute;left:159px;top:834.80px" width="15" height="9" viewBox="0 0 15 9"><path d="M1.2 1.5 L7.5 7.5 L13.8 1.5" fill="none" stroke="#3b2f8a" stroke-width="1.2"/></svg>
<div class="t" style="left:198.6px;top:821.60px;font-size:13px;color:#222;letter-spacing:0.5px">parallel-sch-32char-bkp388-96...</div>
<div style="position:absolute;left:198px;top:842.50px;width:7.6px;height:7.6px;border-radius:50%;background:#137a48"></div>
<div class="t" style="left:213px;top:841.29px;font-size:11px;color:#2a8a5a;letter-spacing:0.35px">Success</div>
<div style="position:absolute;left:435px;top:830.10px;width:93px;height:14.4px;border-radius:2px;background:#36d07f"></div>
<div class="t" style="left:535.6px;top:830.80px;font-size:13px;color:#222;letter-spacing:-0.3px">1 / 1</div>
<div class="t" style="left:655.75px;top:830.80px;font-size:13px;color:#222;letter-spacing:0.75px">bm-16-node-ocp</div>
<div class="t" style="left:790.75px;top:830.80px;font-size:13px;color:#222;letter-spacing:0.38px">venkatnfsbm16ch...</div>
<div style="position:absolute;left:938.5px;top:826.30px;width:32px;height:21.5px;border-radius:11px;background:#d6e7fd"></div>
<div class="t" style="left:954.5px;transform:translateX(-50%);top:831.41px;font-size:11.8px;color:#1f3d9c;font-weight:bold">VM</div>
<div class="t" style="right:540.4000000000001px;top:830.80px;font-size:13px;color:#222;letter-spacing:-0.15px">9.35 GiB</div>
<div class="t" style="left:1089.75px;top:830.80px;font-size:13px;color:#222;letter-spacing:0.5px">05 Jul 2025, 05:00 AM</div>
<div class="t" style="left:1258px;top:830.80px;font-size:13px;color:#222;letter-spacing:0.55px">05 Jul 2025, 05:06 AM</div>
<svg style="position:absolute;left:1439px;top:829.80px" width="15" height="15" viewBox="0 0 15 15"><g fill="none" stroke="#333" stroke-width="1.1"><circle cx="7.5" cy="7.5" r="6.3"/><path d="M7 3.8 V7.6 L9.6 9.8"/></g></svg>
<div style="position:absolute;left:1485px;top:831.70px;width:2.2px;height:2.2px;border-radius:50%;background:#3b2f8a"></div>
<div style="position:absolute;left:1485px;top:836.30px;width:2.2px;height:2.2px;border-radius:50%;background:#3b2f8a"></div>
<div style="position:absolute;left:1485px;top:840.70px;width:2.2px;height:2.2px;border-radius:50%;background:#3b2f8a"></div>
<div style="position:absolute;left:133.5px;top:924.30px;width:1377px;height:1px;background:#e2e2e2"></div>
<svg style="position:absolute;left:159px;top:893.20px" width="15" height="9" viewBox="0 0 15 9"><path d="M1.2 1.5 L7.5 7.5 L13.8 1.5" fill="none" stroke="#3b2f8a" stroke-width="1.2"/></svg>
<div class="t" style="left:198.6px;top:880.00px;font-size:13px;color:#222;letter-spacing:0.5px">parallel-sch-32char-bkp101-10f...</div>
<div style="position:absolute;left:198px;top:900.90px;width:7.6px;height:7.6px;border-radius:50%;background:#137a48"></div>
<div class="t" style="left:213px;top:899.69px;font-size:11px;color:#2a8a5a;letter-spacing:0.35px">Success</div>
<div style="position:absolute;left:435px;top:888.50px;width:93px;height:14.4px;border-radius:2px;background:#36d07f"></div>
<div class="t" style="left:535.6px;top:889.20px;font-size:13px;color:#222;letter-spacing:-0.3px">1 / 1</div>
<div class="t" style="left:655.75px;top:889.20px;font-size:13px;color:#222;letter-spacing:0.75px">bm-16-node-ocp</div>
<div class="t" style="left:790.75px;top:889.20px;font-size:13px;color:#222;letter-spacing:0.38px">venkatnfsbm16ch...</div>
<div style="position:absolute;left:938.5px;top:884.70px;width:32px;height:21.5px;border-radius:11px;background:#d6e7fd"></div>
<div class="t" style="left:954.5px;transform:translateX(-50%);top:889.81px;font-size:11.8px;color:#1f3d9c;font-weight:bold">VM</div>
<div class="t" style="right:540.4000000000001px;top:889.20px;font-size:13px;color:#222;letter-spacing:-0.15px">10.25 GiB</div>
<div class="t" style="left:1089.75px;top:889.20px;font-size:13px;color:#222;letter-spacing:0.5px">05 Jul 2025, 05:00 AM</div>
<div class="t" style="left:1258px;top:889.20px;font-size:13px;color:#222;letter-spacing:0.55px">05 Jul 2025, 05:06 AM</div>
<svg style="position:absolute;left:1439px;top:888.20px" width="15" height="15" viewBox="0 0 15 15"><g fill="none" stroke="#333" stroke-width="1.1"><circle cx="7.5" cy="7.5" r="6.3"/><path d="M7 3.8 V7.6 L9.6 9.8"/></g></svg>
<div style="position:absolute;left:1485px;top:890.10px;width:2.2px;height:2.2px;border-radius:50%;background:#3b2f8a"></div>
<div style="position:absolute;left:1485px;top:894.70px;width:2.2px;height:2.2px;border-radius:50%;background:#3b2f8a"></div>
<div style="position:absolute;left:1485px;top:899.10px;width:2.2px;height:2.2px;border-radius:50%;background:#3b2f8a"></div>
<div style="position:absolute;left:776px;top:362.4px;width:7px;height:560px;background:linear-gradient(to right, rgba(0,0,0,0.12), rgba(0,0,0,0.02) 70%, rgba(0,0,0,0))"></div>
<div style="position:absolute;left:1421px;top:362.4px;width:8px;height:560px;background:linear-gradient(to left, rgba(0,0,0,0.13), rgba(0,0,0,0.02) 70%, rgba(0,0,0,0))"></div>
<div style="position:absolute;left:1420px;top:370px;width:9px;height:20px;overflow:hidden"><div class="t" style="left:6.8px;top:5.59px;font-size:11px;color:#333;">C</div></div>
<div style="position:absolute;left:1585px;top:188px;width:7px;height:575px;background:#adadad;border-radius:4px"></div>
</body></html>
